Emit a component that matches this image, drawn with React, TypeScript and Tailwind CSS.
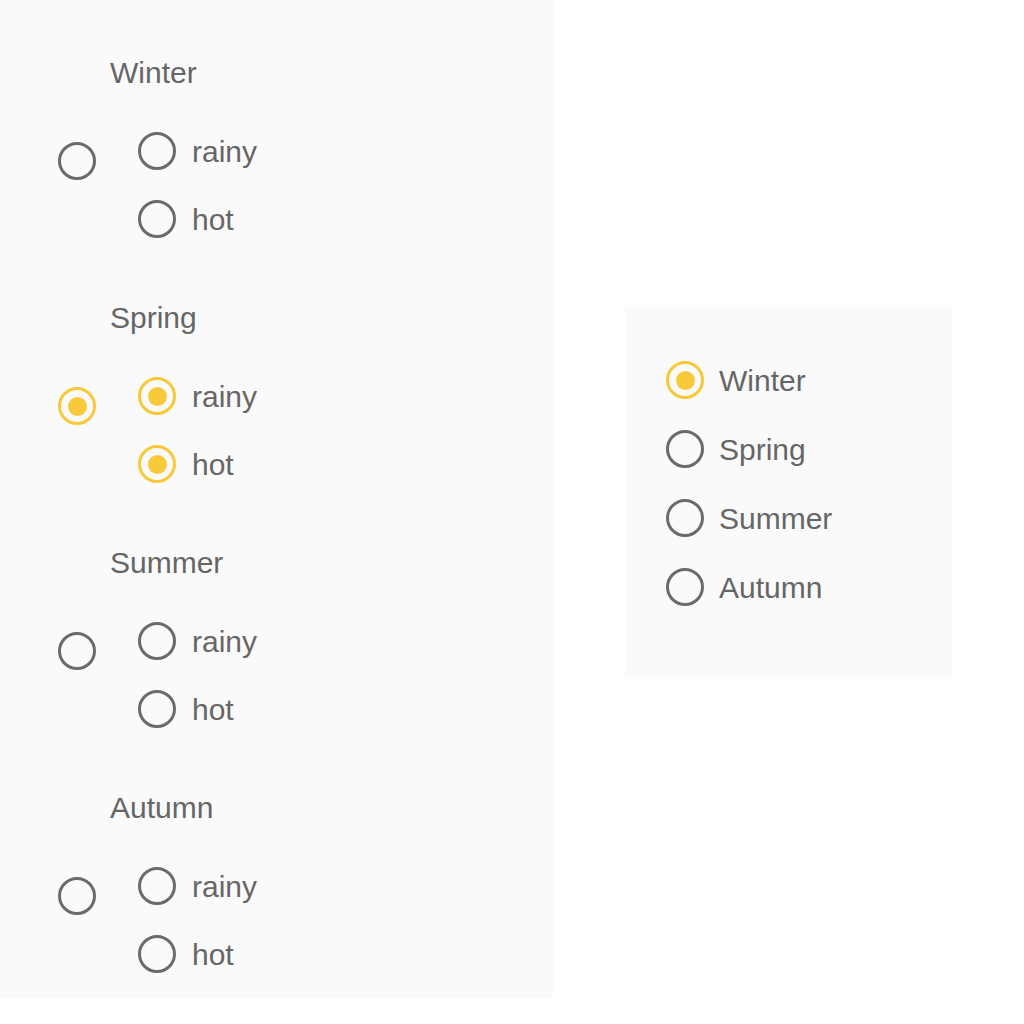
const seasons = ["Winter", "Spring", "Summer", "Autumn"];

function Radio({ checked }: { checked?: boolean }) {
  return (
    <span
      className={
        "flex items-center justify-center w-[38px] h-[38px] shrink-0 rounded-full border-[3px] " +
        (checked ? "border-[#f8c93a]" : "border-[#6b6b6b]")
      }
    >
      {checked && <span className="w-[19px] h-[19px] rounded-full bg-[#f8c93a]" />}
    </span>
  );
}

function Group({ name, checked }: { name: string; checked?: boolean }) {
  return (
    <div className="flex flex-col">
      <div className="pl-[110px] h-[36px] leading-[36px]">{name}</div>
      <div className="flex items-start mt-[41px]">
        <div className="ml-[58px] mt-[10px]">
          <Radio checked={checked} />
        </div>
        <div className="ml-[42px] flex flex-col gap-[30px]">
          {["rainy", "hot"].map((s) => (
            <div key={s} className="flex items-center gap-[16px] h-[38px]">
              <Radio checked={checked} />
              <span>{s}</span>
            </div>
          ))}
        </div>
      </div>
    </div>
  );
}

export default function App() {
  return (
    <div
      className="w-[1024px] h-[1024px] bg-white flex items-start text-[30px] text-[#666666]"
      style={{ fontFamily: '"Liberation Sans", Arial, sans-serif' }}
    >
      <div className="w-[553px] h-[998px] bg-[#fafafa] pt-[55px] flex flex-col gap-[62px]">
        {seasons.map((s) => (
          <Group key={s} name={s} checked={s === "Spring"} />
        ))}
      </div>
      <div className="ml-[72px] mt-[307px] w-[327px] h-[370px] bg-[#fafafa] pt-[54px] pl-[41px] flex flex-col gap-[31px]">
        {seasons.map((s) => (
          <div key={s} className="flex items-center gap-[15px] h-[38px]">
            <Radio checked={s === "Winter"} />
            <span>{s}</span>
          </div>
        ))}
      </div>
    </div>
  );
}
